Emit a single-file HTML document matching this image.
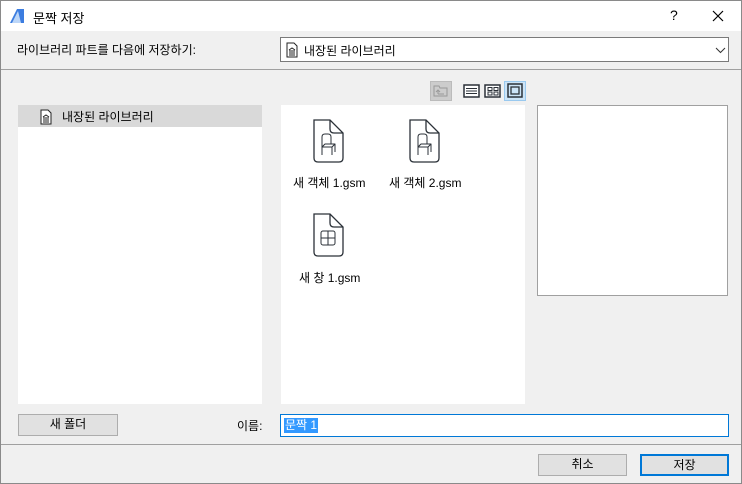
<!DOCTYPE html><html><head><meta charset="utf-8"><style>
body{margin:0;width:742px;height:484px;overflow:hidden;font-family:"Liberation Sans","Noto Sans CJK KR",sans-serif;font-size:12px;color:#000;}
.win{position:absolute;left:0;top:0;width:740px;height:482px;border:1px solid #8a8a8a;background:#f0f0f0;}
.ab{position:absolute}
.title{left:0;top:0;width:740px;height:30px;background:#fff;}
.btn{position:absolute;background:#e1e1e1;border:1px solid #adadad;box-sizing:border-box;text-align:center;line-height:19px;}
.doc{fill:#fff;stroke:#2b3138;stroke-width:1.3}
</style></head><body><div class="win">
<div class="ab title">
<svg class="ab" style="left:8px;top:7px" width="16" height="16"><polygon points="1,15 8,1 15,1 15,15" fill="#3c7de0"/><polygon points="3,15 9,3 12,15" fill="#bcd6f8"/></svg>
<div class="ab" style="left:32px;top:7px;font-size:13px">문짝 저장</div>
<div class="ab" style="left:669px;top:6px;font-size:14px">?</div>
<svg class="ab" style="left:711px;top:9px" width="12" height="12"><path d="M1,1L11,11M11,1L1,11" stroke="#000" stroke-width="1.2"/></svg>
</div>
<div class="ab" style="left:16px;top:40px">라이브러리 파트를 다음에 저장하기:</div>
<div class="ab" style="left:279px;top:36px;width:449px;height:25px;background:#fff;border:1px solid #7a7a7a;box-sizing:border-box">
<svg class="ab" style="left:5px;top:4px" width="12" height="16"><path d="M1,1H8L11,4V15H1Z" fill="#fff" stroke="#222"/><path d="M3,8L6,6L9,8M3,9H9M4,10V12M6,10V12M8,10V12M3,13H9" stroke="#222" fill="none"/></svg>
<div class="ab" style="left:23px;top:4px">내장된 라이브러리</div>
<svg class="ab" style="left:434px;top:9px" width="11" height="7"><path d="M1,1L5.5,5.5L10,1" stroke="#333" fill="none"/></svg>
</div>
<div class="ab" style="left:0;top:68px;width:740px;height:1px;background:#a0a0a0"></div>
<div class="ab" style="left:429px;top:80px;width:22px;height:20px;background:#ccc;border:1px solid #bbb;box-sizing:border-box"><svg width="20" height="18"><path d="M3,4H8L9,6H16V14H3Z" fill="none" stroke="#999"/><path d="M7,12V8M5,10L7,8L9,10M7,12H13" stroke="#999" fill="none"/></svg></div>
<svg class="ab" style="left:462px;top:82px" width="64" height="16"><rect x="1" y="2" width="15" height="12" fill="#fff" stroke="#2b3138" stroke-width="1.5"/><path d="M3,5.5H14M3,8H14M3,10.5H14" stroke="#2b3138"/><rect x="22" y="2" width="15" height="12" fill="#fff" stroke="#2b3138" stroke-width="1.5"/><rect x="25" y="4.5" width="4" height="3" fill="none" stroke="#2b3138"/><rect x="31" y="4.5" width="4" height="3" fill="none" stroke="#2b3138"/><rect x="25" y="9" width="4" height="3" fill="none" stroke="#2b3138"/><rect x="31" y="9" width="4" height="3" fill="none" stroke="#2b3138"/></svg>
<div class="ab" style="left:503px;top:80px;width:22px;height:20px;background:#cce4f7;border:1px solid #99c9ef;box-sizing:border-box"><svg width="20" height="18"><rect x="3" y="2" width="14" height="13" fill="none" stroke="#2b3138" stroke-width="1.5"/><rect x="6" y="5" width="8" height="7" fill="none" stroke="#2b3138" stroke-width="1.3"/></svg></div>
<div class="ab" style="left:17px;top:104px;width:244px;height:299px;background:#fff"></div>
<div class="ab" style="left:17px;top:104px;width:244px;height:22px;background:#d9d9d9"></div>
<svg class="ab" style="left:39px;top:108px" width="12" height="16"><path d="M1,1H8L11,4V15H1Z" fill="#fff" stroke="#222"/><path d="M3,8L6,6L9,8M3,9H9M4,10V12M6,10V12M8,10V12M3,13H9" stroke="#222" fill="none"/></svg>
<div class="ab" style="left:61px;top:107px">내장된 라이브러리</div>
<div class="ab" style="left:280px;top:104px;width:244px;height:299px;background:#fff"></div>
<svg class="ab" style="left:310px;top:116px" width="160" height="145">
<g><path class="doc" d="M3,3H19L32,16V41Q32,45 28,45H7Q3,45 3,41Z"/><path d="M19,3V12Q19,16 23,16H32" fill="none" stroke="#2b3138" stroke-width="1.3"/><path d="M11,30V20Q11,17 14,17H17Q20,17 20,20V27M11,30L14,27H24L21,30ZM11,30V38M21,30V38M24,27V35" fill="none" stroke="#2b3138" stroke-linejoin="round"/></g>
<g transform="translate(96,0)"><path class="doc" d="M3,3H19L32,16V41Q32,45 28,45H7Q3,45 3,41Z"/><path d="M19,3V12Q19,16 23,16H32" fill="none" stroke="#2b3138" stroke-width="1.3"/><path d="M11,30V20Q11,17 14,17H17Q20,17 20,20V27M11,30L14,27H24L21,30ZM11,30V38M21,30V38M24,27V35" fill="none" stroke="#2b3138" stroke-linejoin="round"/></g>
<g transform="translate(0,94)"><path class="doc" d="M3,3H19L32,16V41Q32,45 28,45H7Q3,45 3,41Z"/><path d="M19,3V12Q19,16 23,16H32" fill="none" stroke="#2b3138" stroke-width="1.3"/><rect x="10" y="20" width="14" height="14" rx="2" fill="none" stroke="#2b3138"/><path d="M17,20V34M10,27H24" stroke="#2b3138"/></g>
</svg>
<div class="ab" style="left:292px;top:173px">새 객체 1.gsm</div>
<div class="ab" style="left:388px;top:173px">새 객체 2.gsm</div>
<div class="ab" style="left:298px;top:268px">새 창 1.gsm</div>
<div class="ab" style="left:536px;top:104px;width:191px;height:191px;background:#fff;border:1px solid #a0a0a0;box-sizing:border-box"></div>
<div class="btn" style="left:17px;top:413px;width:100px;height:22px">새 폴더</div>
<div class="ab" style="left:236px;top:416px">이름:</div>
<div class="ab" style="left:279px;top:413px;width:449px;height:23px;background:#fff;border:1px solid #0078d7;box-sizing:border-box"><span class="ab" style="left:3px;top:3px;background:#3399ff;color:#fff;line-height:15px;padding:0 1px">문짝 1</span></div>
<div class="ab" style="left:0;top:443px;width:740px;height:1px;background:#a0a0a0"></div>
<div class="btn" style="left:537px;top:453px;width:89px;height:22px">취소</div>
<div class="btn" style="left:639px;top:453px;width:89px;height:22px;border:2px solid #0078d7;line-height:18px">저장</div>
</div></body></html>
